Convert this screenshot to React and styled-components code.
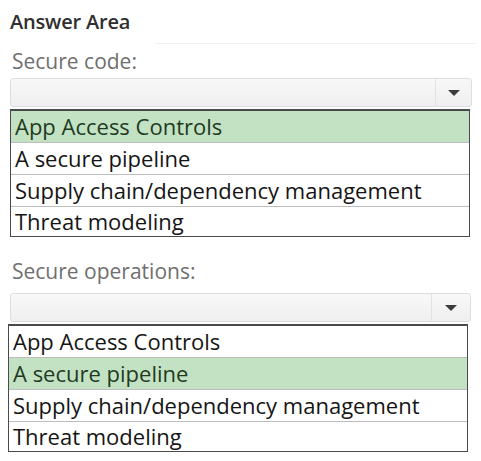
import React from 'react';
import styled, { createGlobalStyle } from 'styled-components';

const GlobalStyle = createGlobalStyle`
  html, body {
    margin: 0;
    padding: 0;
    background: #ffffff;
  }
  body {
    font-family: "Open Sans", "Noto Sans", sans-serif;
  }
`;

const Page = styled.div`
  width: 481px;
  height: 461px;
  padding: 12px 0 0 10px;
  box-sizing: border-box;
  overflow: hidden;
`;

const Header = styled.div`
  position: relative;
  height: 32px;
  font-size: 20px;
  line-height: 20px;
  font-weight: 600;
  color: #2f2f2f;
  letter-spacing: -0.2px;

  &::after {
    content: '';
    position: absolute;
    left: 145px;
    right: 5px;
    bottom: 0;
    border-bottom: 1px solid #f1f1f1;
  }
`;

const Section = styled.div`
  margin-top: ${p => p.$top}px;
`;

const Label = styled.div`
  font-size: 21px;
  line-height: 24px;
  color: #6f6f6f;
  padding-left: 2px;
  margin-bottom: ${p => p.$gap}px;
`;

const Select = styled.div`
  display: flex;
  width: ${p => p.$width}px;
  height: 29px;
  box-sizing: border-box;
  border: 1px solid #dedede;
  border-radius: 3px;
  background: linear-gradient(#f8f8f8, #efefef);
`;

const SelectValue = styled.div`
  flex: 1;
`;

const SelectButton = styled.div`
  width: ${p => p.$btn}px;
  border-left: 1px solid #e2e2e2;
  display: flex;
  align-items: center;
  justify-content: center;
`;

const Arrow = styled.span`
  width: 0;
  height: 0;
  border-left: 6px solid transparent;
  border-right: 6px solid transparent;
  border-top: 6px solid #3c3c3c;
`;

const Options = styled.ul`
  list-style: none;
  margin: 2px 0 0 ${p => p.$shift}px;
  padding: 0;
  width: 460px;
  box-sizing: border-box;
  border: 1px solid #4a4a4a;
  border-top-width: 2px;
`;

const Option = styled.li`
  height: 32px;
  box-sizing: border-box;
  padding-left: 4px;
  font-size: 22px;
  line-height: 31px;
  white-space: nowrap;
  color: ${p => (p.$picked ? '#1f3a1f' : '#151515')};
  background: ${p => (p.$picked ? '#c3e2c3' : '#ffffff')};
  border-bottom: 1px solid #bdbdbd;

  &:last-child {
    height: 29px;
    line-height: 29px;
    border-bottom: none;
  }
`;

const choices = [
  'App Access Controls',
  'A secure pipeline',
  'Supply chain/dependency management',
  'Threat modeling',
];

const sections = [
  { label: 'Secure code:', picked: 0, top: 5, gap: 5, width: 462, btn: 35, shift: 0 },
  { label: 'Secure operations:', picked: 1, top: 22, gap: 10, width: 461, btn: 38, shift: -2 },
];

function Dropdown({ label, picked, top, gap, width, btn, shift }) {
  return (
    <Section $top={top}>
      <Label $gap={gap}>{label}</Label>
      <Select $width={width}>
        <SelectValue />
        <SelectButton $btn={btn}>
          <Arrow />
        </SelectButton>
      </Select>
      <Options $shift={shift}>
        {choices.map((c, i) => (
          <Option key={c} $picked={i === picked}>{c}</Option>
        ))}
      </Options>
    </Section>
  );
}

export default function App() {
  return (
    <>
      <GlobalStyle />
      <Page>
        <Header>Answer Area</Header>
        {sections.map(s => (
          <Dropdown key={s.label} {...s} />
        ))}
      </Page>
    </>
  );
}
